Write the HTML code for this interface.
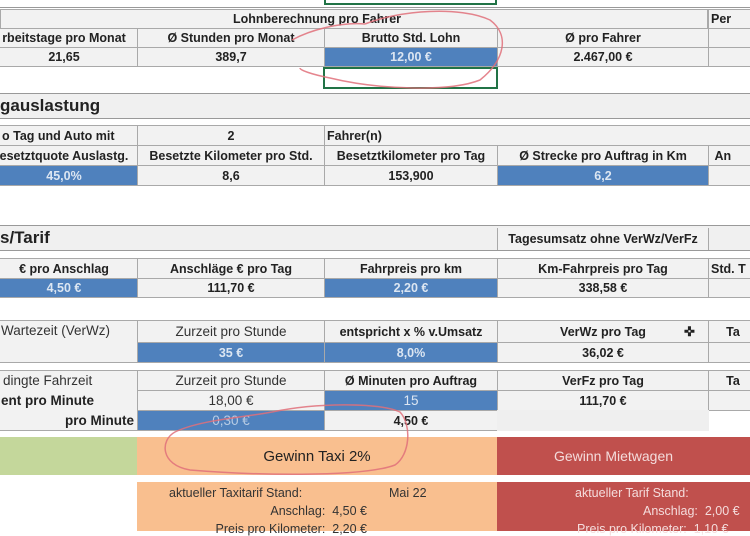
<!DOCTYPE html>
<html><head><meta charset="utf-8"><style>
body{margin:0;width:750px;height:531px;overflow:hidden;background:#fff;font-family:"Liberation Sans",sans-serif;position:relative}
.c{position:absolute;box-sizing:border-box;background:#f2f2f2;border:1px solid #a9a9a9;font-size:12.5px;font-weight:bold;color:#222;display:flex;align-items:center;justify-content:center;white-space:nowrap;overflow:hidden}
.b{background:#4f81bd;color:#dce6f2}
.n{font-weight:normal;font-size:13.5px;color:#333}
.l{justify-content:flex-start;padding-left:2px}
.r{justify-content:flex-end;padding-right:3px}
.bar{position:absolute;left:0;width:750px;background:#f0f0f0;border-top:1px solid #999;border-bottom:1px solid #999;box-sizing:border-box;font-size:17px;font-weight:bold;color:#222;display:flex;align-items:center}
.f{position:absolute;box-sizing:border-box}
</style></head><body>
<div class="f" style="left:0;top:7px;width:750px;height:1px;background:#999"></div>
<div class="f" style="left:324px;top:0;width:173px;height:5px;border:2px solid #217346;border-top:none"></div>

<div class="c" style="left:0;top:9px;width:708px;height:20px;border-right:1px solid #a9a9a9">&nbsp;</div>
<div class="f" style="left:137px;top:9px;width:360px;height:20px;font-size:12.5px;font-weight:bold;display:flex;align-items:center;justify-content:center;color:#222">Lohnberechnung pro Fahrer</div>
<div class="c l" style="left:708px;top:9px;width:50px;height:20px">Per</div>

<div class="c" style="left:-10px;top:28px;width:148px;height:20px">rbeitstage pro Monat</div>
<div class="c" style="left:137px;top:28px;width:188px;height:20px">Ø Stunden pro Monat</div>
<div class="c" style="left:324px;top:28px;width:174px;height:20px">Brutto Std. Lohn</div>
<div class="c" style="left:497px;top:28px;width:212px;height:20px">Ø pro Fahrer</div>
<div class="c" style="left:708px;top:28px;width:50px;height:20px"></div>
<div class="c" style="left:-10px;top:47px;width:148px;height:20px">21,65</div>
<div class="c" style="left:137px;top:47px;width:188px;height:20px">389,7</div>
<div class="c b" style="left:324px;top:47px;width:174px;height:20px">12,00 €</div>
<div class="c" style="left:497px;top:47px;width:212px;height:20px">2.467,00 €</div>
<div class="c" style="left:708px;top:47px;width:50px;height:20px"></div>
<div class="f" style="left:323px;top:67px;width:175px;height:22px;border:2px solid #217346"></div>

<div class="bar" style="top:93px;height:26px;padding-left:0">gauslastung</div>

<div class="c l" style="left:-1px;top:125px;width:139px;height:21px">o Tag und Auto mit</div>
<div class="c" style="left:137px;top:125px;width:188px;height:21px">2</div>
<div class="c l" style="left:324px;top:125px;width:430px;height:21px">Fahrer(n)</div>
<div class="c" style="left:-10px;top:145px;width:148px;height:21px">esetztquote Auslastg.</div>
<div class="c" style="left:137px;top:145px;width:188px;height:21px">Besetzte Kilometer pro Std.</div>
<div class="c" style="left:324px;top:145px;width:174px;height:21px">Besetztkilometer pro Tag</div>
<div class="c" style="left:497px;top:145px;width:212px;height:21px">Ø Strecke pro Auftrag in Km</div>
<div class="c l" style="left:708px;top:145px;width:50px;height:21px">&nbsp;An</div>
<div class="c b" style="left:-10px;top:165px;width:148px;height:21px">45,0%</div>
<div class="c" style="left:137px;top:165px;width:188px;height:21px">8,6</div>
<div class="c" style="left:324px;top:165px;width:174px;height:21px">153,900</div>
<div class="c b" style="left:497px;top:165px;width:212px;height:21px">6,2</div>
<div class="c" style="left:708px;top:165px;width:50px;height:21px"></div>

<div class="bar" style="top:225px;height:26px">s/Tarif</div>
<div class="c" style="left:497px;top:228px;width:212px;height:22px;border-top:none;border-bottom:none">Tagesumsatz ohne VerWz/VerFz</div>

<div class="c" style="left:-10px;top:258px;width:148px;height:21px">€ pro Anschlag</div>
<div class="c" style="left:137px;top:258px;width:188px;height:21px">Anschläge € pro Tag</div>
<div class="c" style="left:324px;top:258px;width:174px;height:21px">Fahrpreis pro km</div>
<div class="c" style="left:497px;top:258px;width:212px;height:21px">Km-Fahrpreis pro Tag</div>
<div class="c l" style="left:708px;top:258px;width:50px;height:21px">Std. T</div>
<div class="c b" style="left:-10px;top:278px;width:148px;height:20px">4,50 €</div>
<div class="c" style="left:137px;top:278px;width:188px;height:20px">111,70 €</div>
<div class="c b" style="left:324px;top:278px;width:174px;height:20px">2,20 €</div>
<div class="c" style="left:497px;top:278px;width:212px;height:20px">338,58 €</div>
<div class="c" style="left:708px;top:278px;width:50px;height:20px"></div>

<div class="c n" style="left:-10px;top:320px;width:148px;height:43px;align-items:flex-start;justify-content:flex-start;padding:2px 0 0 10px">Wartezeit (VerWz)</div>
<div class="c n" style="left:137px;top:320px;width:188px;height:23px">Zurzeit pro Stunde</div>
<div class="c" style="left:324px;top:320px;width:174px;height:23px">entspricht x % v.Umsatz</div>
<div class="c" style="left:497px;top:320px;width:212px;height:23px">VerWz pro Tag<span style="position:absolute;left:186px;font-size:13px">✜</span></div>
<div class="c" style="left:708px;top:320px;width:50px;height:23px">Ta</div>
<div class="c b" style="left:137px;top:342px;width:188px;height:21px">35 €</div>
<div class="c b" style="left:324px;top:342px;width:174px;height:21px">8,0%</div>
<div class="c" style="left:497px;top:342px;width:212px;height:21px">36,02 €</div>
<div class="c" style="left:708px;top:342px;width:50px;height:21px"></div>

<div class="c n l" style="left:-10px;top:370px;width:148px;height:21px;padding-left:12px">dingte Fahrzeit</div>
<div class="c l" style="left:-10px;top:390px;width:148px;height:21px;font-size:13.5px;padding-left:10px;border-top:none">ent pro Minute</div>
<div class="c r" style="left:-10px;top:410px;width:148px;height:21px;font-size:13.5px;border-top:none">pro Minute</div>
<div class="c n" style="left:137px;top:370px;width:188px;height:21px">Zurzeit pro Stunde</div>
<div class="c" style="left:324px;top:370px;width:174px;height:21px">Ø Minuten pro Auftrag</div>
<div class="c" style="left:497px;top:370px;width:212px;height:21px">VerFz pro Tag</div>
<div class="c" style="left:708px;top:370px;width:50px;height:21px">Ta</div>
<div class="c n" style="left:137px;top:390px;width:188px;height:21px">18,00 €</div>
<div class="c b" style="left:324px;top:390px;width:174px;height:21px;font-weight:normal;font-size:13.5px">15</div>
<div class="c" style="left:497px;top:390px;width:212px;height:21px">111,70 €</div>
<div class="c" style="left:708px;top:390px;width:50px;height:21px"></div>
<div class="c b n" style="left:137px;top:410px;width:188px;height:21px;color:#b8cce4">0,30 €</div>
<div class="c" style="left:324px;top:410px;width:174px;height:21px">4,50 €</div>
<div class="c" style="left:497px;top:410px;width:212px;height:21px;border:none;background:#efefef"></div>

<div class="f" style="left:0;top:437px;width:137px;height:38px;background:#c4d79b"></div>
<div class="f" style="left:137px;top:437px;width:360px;height:38px;background:#f9bf8f;display:flex;align-items:center;justify-content:center;font-size:15px;color:#222">Gewinn Taxi 2%</div>
<div class="f" style="left:497px;top:437px;width:253px;height:38px;background:#c0504d;display:flex;align-items:center;justify-content:center;font-size:14px;color:#f4dcdc;padding-right:20px">Gewinn Mietwagen</div>

<div class="f" style="left:137px;top:482px;width:360px;height:49px;background:#f9bf8f;font-size:12.5px;color:#333">
<div style="position:absolute;left:32px;top:4px">aktueller Taxitarif Stand:</div>
<div style="position:absolute;left:252px;top:4px">Mai 22</div>
<div style="position:absolute;right:130px;top:22px">Anschlag:&nbsp; 4,50 €</div>
<div style="position:absolute;right:130px;top:40px">Preis pro Kilometer:&nbsp; 2,20 €</div>
</div>
<div class="f" style="left:497px;top:482px;width:253px;height:49px;background:#c0504d;font-size:12.5px;color:#f4dcdc">
<div style="position:absolute;left:78px;top:4px">aktueller Tarif Stand:</div>
<div style="position:absolute;left:146px;top:22px">Anschlag:&nbsp; 2,00 €</div>
<div style="position:absolute;left:80px;top:40px">Preis pro Kilometer:&nbsp; 1,10 €</div>
</div>

<svg class="f" style="left:0;top:0" width="750" height="531">
<g fill="none" stroke="#e0707a" stroke-width="1.5" opacity="0.85">
<path d="M365 24 C400 10 460 6 490 20 C510 35 505 60 480 80 C450 92 380 90 330 78 C310 74 300 70 300 68 M292 40 C310 30 340 22 365 24"/>
<path d="M272 412 C320 402 380 403 400 412 C412 425 410 455 395 465 C360 478 250 475 190 470 C160 465 160 440 175 432 C200 420 240 418 272 412"/>
</g></svg>
</body></html>
